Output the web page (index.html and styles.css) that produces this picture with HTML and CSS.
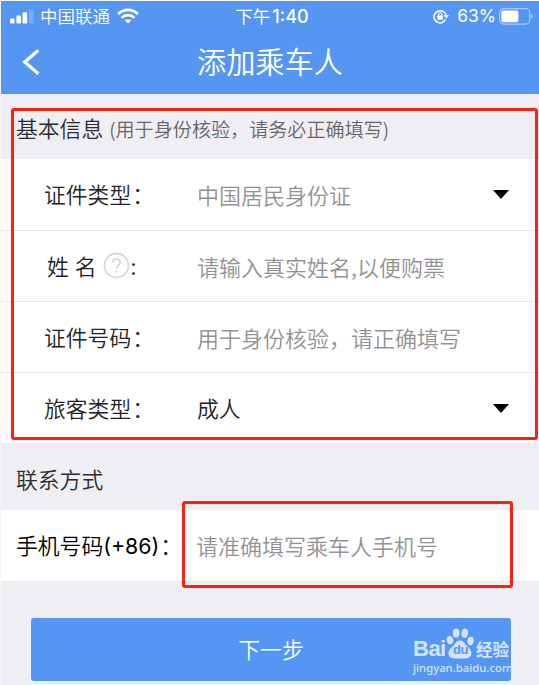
FILE: index.html
```html
<!DOCTYPE html>
<html lang="zh-CN">

<head>
    <meta charset="UTF-8">
    <meta name="viewport" content="width=device-width, initial-scale=1.0">
    <title>添加乘车人</title>
    <link rel="stylesheet" href="styles.css">
</head>

<body>
    <div class="page">
        <header class="header">
            <div class="status">
                <div class="status-left">
                    <svg class="signal" width="24" height="15" viewBox="0 0 24 15" fill="#fff">
                        <rect x="0" y="9.5" width="4.6" height="5" rx="1.2" />
                        <rect x="6.4" y="6.5" width="4.6" height="8" rx="1.2" />
                        <rect x="12.6" y="3.2" width="4.6" height="11.3" rx="1.2" />
                        <rect x="19" y="0.3" width="4.6" height="14.2" rx="1.2" opacity=".2" />
                    </svg>
                    <span class="carrier">中国联通</span>
                    <svg class="wifi" width="22" height="16" viewBox="0 0 22 16" fill="none" stroke="#fff" stroke-width="2.9">
                        <path d="M1.2 6.1C6.8.5 15.2.5 20.8 6.1" />
                        <path d="M4.7 9.7C8.3 6.2 13.7 6.2 17.3 9.7" />
                        <path d="M11 15.6L7.9 12.5C9.7 10.8 12.3 10.8 14.1 12.5Z" fill="#fff" stroke="none" />
                    </svg>
                </div>
                <div class="time">下午 <b>1:40</b></div>
                <div class="status-right">
                    <svg class="lock" width="16" height="15" viewBox="0 0 16 15" fill="none" stroke="#fff" stroke-width="1.5">
                        <path d="M10.2 13.1A6.1 6.1 0 1 1 13.2 7" />
                        <path d="M12.6 10.2A6.1 6.1 0 0 1 9 13.4" />
                        <path d="M10.6 6.2H16L13.3 9.6Z" fill="#fff" stroke="none" />
                        <rect x="4.3" y="6.5" width="5.6" height="4.3" rx=".6" fill="#fff" stroke="none" />
                        <path d="M5.5 7V5.4a1.6 1.6 0 0 1 3.2 0V7" stroke-width="1.1" />
                    </svg>
                    <span class="percent">63%</span>
                    <svg class="battery" width="35" height="17" viewBox="0 0 35 17">
                        <rect x=".7" y=".7" width="30" height="15.4" rx="4" fill="none" stroke="#fff" stroke-opacity=".5" stroke-width="1.2" />
                        <rect x="2.4" y="2.6" width="17" height="11.6" rx="2" fill="#fff" />
                        <path d="M32.2 5.8c2 .8 2 4.4 0 5.2z" fill="#fff" opacity=".5" />
                    </svg>
                </div>
            </div>
            <div class="nav">
                <svg class="back" width="18" height="26" viewBox="0 0 18 26" fill="none" stroke="#fff" stroke-width="3.2">
                    <path d="M16.3 1.2L2.7 13L16.3 24.8" />
                </svg>
                <h1 class="title">添加乘车人</h1>
            </div>
        </header>

        <form class="form">
            <div class="section section-first">基本信息<span class="hint">(用于身份核验，请务必正确填写)</span></div>
            <div class="row">
                <div class="label">证件类型<span class="colon">：</span></div>
                <div class="value placeholder">中国居民身份证</div>
                <span class="arrow"></span>
            </div>
            <div class="row">
                <div class="label label-name">姓 名<svg class="help" width="27" height="27" viewBox="0 0 27 27" fill="none">
                        <circle cx="13.5" cy="13.5" r="12" stroke="#d6d8da" stroke-width="1.8" />
                        <path d="M9.7 10.6c0-4.8 7.5-4.6 7.5-.3 0 3-3.6 3-3.6 6.3" stroke="#ced1d3" stroke-width="1.5" />
                        <circle cx="13.6" cy="19.5" r="1.1" fill="#ced1d3" />
                    </svg><span class="colon-name">:</span></div>
                <div class="value placeholder">请输入真实姓名,以便购票</div>
            </div>
            <div class="row">
                <div class="label">证件号码<span class="colon">：</span></div>
                <div class="value placeholder">用于身份核验，请正确填写</div>
            </div>
            <div class="row row-last">
                <div class="label">旅客类型<span class="colon">：</span></div>
                <div class="value">成人</div>
                <span class="arrow"></span>
            </div>
            <div class="section">联系方式</div>
            <div class="row row-phone">
                <div class="label label-phone">手机号码<span class="code">(+86)</span><span class="colon">：</span></div>
                <div class="value placeholder">请准确填写乘车人手机号</div>
            </div>
            <button type="button" class="btn-next">下一步</button>
        </form>

        <!-- red marks over the form -->
        <div class="mark mark-info"></div>
        <div class="mark mark-phone"></div>

        <!-- watermark -->
        <div class="watermark">
            <div class="wm-logo">
                <span class="wm-bai">Bai</span>
                <span class="wm-paw">
                    <svg width="28" height="31" viewBox="0 0 28 31" fill="#d3e3fb">
                        <ellipse cx="4" cy="12.2" rx="3.2" ry="4.2" transform="rotate(-12 4 12.2)" />
                        <ellipse cx="10.2" cy="5" rx="3.3" ry="4.6" />
                        <ellipse cx="18.8" cy="5.2" rx="3.3" ry="4.6" transform="rotate(12 18.8 5.2)" />
                        <ellipse cx="24.6" cy="13" rx="3.2" ry="4.2" transform="rotate(10 24.6 13)" />
                        <path d="M14 12.4c3.6 0 4.8 3.4 7 5.6 2.4 2.3 4.4 4 4.4 7 0 3.4-2.3 5.4-5.4 5.4H8c-3.4 0-5.6-2-5.6-5.4 0-3 2.4-4.8 4.6-7 2.2-2.2 3.4-5.6 7-5.6z" />
                    </svg>
                    <span class="wm-du">du</span>
                </span>
                <span class="wm-jy">经验</span>
            </div>
            <div class="wm-url">jingyan.baidu.com</div>
        </div>
    </div>
</body>

</html>
```
FILE: styles.css
```css
* {
    margin: 0;
    padding: 0;
    box-sizing: border-box;
}

body {
    font-family: "Noto Sans CJK SC", sans-serif;
    font-weight: 350;
    background: #efeef3;
    height: 685px;
    overflow: hidden;
}

.page {
    position: relative;
    height: 685px;
    border-top: 1px solid #f6f6f4;
    border-left: 1px solid #f6f6f8;
}

.header {
    height: 93px;
    background: #5596f3;
    color: #fff;
}

.status {
    display: grid;
    grid-template-columns: 1fr auto 1fr;
    align-items: center;
    height: 30px;
    padding: 0 5px 0 9px;
    line-height: 28px;
}

.status-left,
.status-right {
    display: flex;
    align-items: center;
}

.carrier {
    margin: 0 7px 0 6px;
    font-size: 17.5px;
}

.time {
    font-size: 17.5px;
    font-weight: 400;
    word-spacing: -2px;
}

.time b,
.percent {
    font-family: Inter, sans-serif;
    font-weight: 500;
}

.time b {
    font-size: 18px;
}

.status-right {
    justify-content: flex-end;
}

.percent {
    margin: 0 3px 0 8px;
    font-size: 17.5px;
    font-weight: 400;
}

.nav {
    display: flex;
    align-items: center;
    height: 61px;
    padding-left: 21px;
}

.title {
    margin-left: 157px;
    padding-bottom: 4px;
    font-size: 29.2px;
    line-height: 56px;
    font-weight: 350;
}

.section {
    height: 67px;
    padding: 3px 15px 0;
    font-size: 21.8px;
    line-height: 66px;
    color: #2b2b2e;
}

.section-first {
    height: 65px;
    padding-top: 1px;
    white-space: nowrap;
}

.hint {
    margin-left: 6px;
    font-size: 19.1px;
    color: #66666a;
}

.row {
    display: flex;
    align-items: center;
    height: 71px;
    padding: 0 0 1px 43px;
    background: #fff;
    border-bottom: 1px solid #e8e8ea;
    font-size: 21.8px;
    line-height: 32px;
    color: #222;
}

.section-first + .row {
    height: 72px;
}

.row-last {
    height: 70px;
    padding-bottom: 0;
    border-bottom: none;
}

.label {
    flex: none;
    width: 153px;
    white-space: nowrap;
}

.colon {
    margin-left: 1px;
}

.label-name {
    display: flex;
    align-items: center;
    padding-left: 3px;
    word-spacing: 1px;
}

.help {
    margin: 0 0 0 7px;
}

.row-phone {
    height: 72px;
    padding-left: 15px;
    color: #000;
}

.label-phone {
    width: 180px;
}

.code {
    font-family: Inter, sans-serif;
    font-size: 21.3px;
    font-weight: 400;
}

.value {
    flex: 1;
    white-space: nowrap;
}

.placeholder {
    font-size: 22px;
    color: #939393;
}

.arrow {
    margin-right: 30px;
    border: 8px solid transparent;
    border-top: 9px solid #000;
    border-bottom: none;
}

.btn-next {
    display: block;
    width: 480px;
    height: 63px;
    margin: 36px 0 0 30px;
    padding-bottom: 2px;
    border: none;
    border-radius: 3px;
    background: #5596f3;
    color: #fff;
    font-family: inherit;
    font-size: 21.8px;
    font-weight: 350;
}

.mark {
    position: absolute;
    border: 3px solid #ff2013;
    border-radius: 3px;
}

.mark-info {
    left: 10px;
    top: 107px;
    width: 527px;
    height: 332px;
}

.mark-phone {
    left: 181px;
    top: 500px;
    width: 331px;
    height: 87px;
}

.watermark {
    position: absolute;
    left: 412px;
    top: 626px;
    color: #d3e3fb;
    white-space: nowrap;
}

.wm-logo {
    display: flex;
    align-items: flex-end;
    height: 32px;
}

.wm-bai {
    width: 33px;
    font-family: "Liberation Sans", sans-serif;
    font-size: 22px;
    font-weight: 700;
    line-height: 20px;
    letter-spacing: -.5px;
}

.wm-paw {
    position: relative;
    width: 28px;
    height: 31px;
}

.wm-paw svg {
    display: block;
}

.wm-du {
    position: absolute;
    left: 7px;
    top: 14px;
    font: 700 13px/15px "Liberation Sans", sans-serif;
    letter-spacing: -.5px;
    color: #5596f3;
}

.wm-jy {
    margin-left: 2px;
    font-size: 16.5px;
    font-weight: 700;
    line-height: 16px;
    padding-bottom: 2px;
}

.wm-url {
    font-family: "Noto Sans", sans-serif;
    font-size: 11.3px;
    font-weight: 500;
    line-height: 17px;
}
```
